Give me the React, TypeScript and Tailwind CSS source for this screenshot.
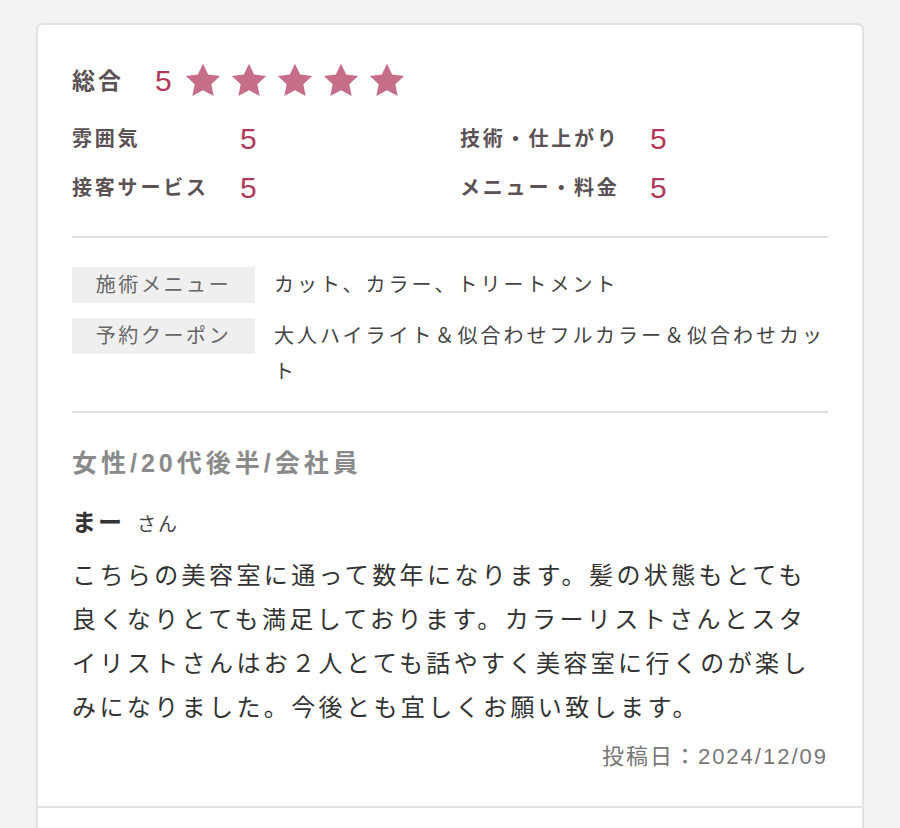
import React from "react";

const FONT = { fontFamily: '"Liberation Sans","Noto Sans CJK JP",sans-serif' };

function Star() {
  return (
    <svg width="40" height="40" viewBox="0 0 24 24" className="fill-[#c66e88]">
      <polygon points="12,1.6 15.1,8.1 22.3,9 17,13.9 18.4,21 12,17.5 5.6,21 7,13.9 1.7,9 8.9,8.1" />
    </svg>
  );
}

function Score({ label, value, w }: { label: string; value: number; w: string }) {
  return (
    <div className="flex items-center h-[36px]">
      <span className={`${w} text-[20px] font-bold tracking-[2.8px] text-[#5a5254]`}>{label}</span>
      <span className="text-[30px] leading-none text-[#b0395a]">{value}</span>
    </div>
  );
}

function InfoRow({ label, value }: { label: string; value: string }) {
  return (
    <div className="flex items-start">
      <div className="w-[183px] shrink-0 h-[36px] bg-[#efefef] flex items-center justify-center text-[20px] tracking-[2.6px] text-[#666]">
        {label}
      </div>
      <div className="ml-[19px] flex-1 text-[20px] leading-[36px] tracking-[3px] text-[#444]">{value}</div>
    </div>
  );
}

export default function App() {
  return (
    <div style={FONT} className="min-h-screen bg-[#f3f2f0] pt-[23px] px-[36px]">
      <div className="bg-white border-2 border-[#e2e2e2] rounded-t-[7px] px-[34px] pt-[36px] pb-[35px]">
        <div className="flex items-center h-[40px]">
          <span className="text-[23px] font-bold tracking-[3px] text-[#5a5254]">総合</span>
          <span className="ml-[31px] text-[30px] leading-none text-[#b0395a]">5</span>
          <div className="ml-[11px] flex gap-[6px]">
            <Star /><Star /><Star /><Star /><Star />
          </div>
        </div>
        <div className="mt-[20px] grid grid-cols-[388px_1fr] gap-y-[13px]">
          <Score label="雰囲気" value={5} w="w-[168px]" />
          <Score label="技術・仕上がり" value={5} w="w-[190px]" />
          <Score label="接客サービス" value={5} w="w-[168px]" />
          <Score label="メニュー・料金" value={5} w="w-[190px]" />
        </div>
        <div className="mt-[30px] h-[2px] bg-[#dedede]" />
        <div className="mt-[29px] flex flex-col gap-[15px]">
          <InfoRow label="施術メニュー" value="カット、カラー、トリートメント" />
          <InfoRow label="予約クーポン" value="大人ハイライト＆似合わせフルカラー＆似合わせカット" />
        </div>
        <div className="mt-[21px] h-[2px] bg-[#dedede]" />
        <div className="mt-[35px] h-[32px] flex items-center text-[25px] font-bold tracking-[4px] text-[#8a8a8a]">
          女性/20代後半/会社員
        </div>
        <div className="mt-[25px] h-[32px] flex items-baseline">
          <span className="text-[24px] font-bold tracking-[2px] text-[#333]">まー</span>
          <span className="ml-[13px] text-[19px] tracking-[2px] text-[#444]">さん</span>
        </div>
        <p className="mt-[17px] text-[24px] leading-[44px] tracking-[3.4px] text-[#333]">
          こちらの美容室に通って数年になります。髪の状態もとても良くなりとても満足しております。カラーリストさんとスタイリストさんはお２人とても話やすく美容室に行くのが楽しみになりました。今後とも宜しくお願い致します。
        </p>
        <div className="mt-[11px] h-[30px] flex items-center justify-end text-[22px] tracking-[2px] text-[#777]">
          投稿日：2024/12/09
        </div>
      </div>
      <div className="bg-white border-x-2 border-[#e2e2e2] h-[40px]" />
    </div>
  );
}
